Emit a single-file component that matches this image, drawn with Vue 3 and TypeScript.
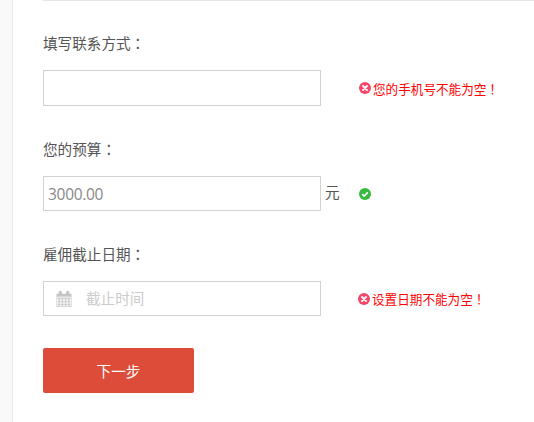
<script setup lang="ts">
const budget = '3000.00'
</script>

<template>
  <div class="page">
    <div class="content">
      <div class="field">
        <label class="label">填写联系方式：</label>
        <div class="row">
          <input class="input tall" type="text" />
          <div class="tip tip-first">
            <svg class="status" viewBox="0 0 12 12">
              <circle cx="6" cy="6" r="6" fill="#f6476b" />
              <path d="M4 4l4 4M8 4l-4 4" stroke="#fff" stroke-width="1.8" stroke-linecap="round" />
            </svg>
            <span>您的手机号不能为空！</span>
          </div>
        </div>
      </div>

      <div class="field">
        <label class="label">您的预算：</label>
        <div class="row">
          <input class="input money" type="text" :value="budget" />
          <span class="unit">元</span>
          <svg class="status ok" viewBox="0 0 12 12">
            <circle cx="6" cy="6" r="6" fill="#35b93f" />
            <path d="M3.2 6.2l2 1.9 3.6-3.7" fill="none" stroke="#fff" stroke-width="1.7" />
          </svg>
        </div>
      </div>

      <div class="field">
        <label class="label">雇佣截止日期：</label>
        <div class="row">
          <div class="input date">
            <svg class="calendar" viewBox="1 .5 14 15">
              <path fill="#c4c4c8" d="M1 3h2V1.5a1 1 0 0 1 1-1h1a1 1 0 0 1 1 1V3h4V1.5a1 1 0 0 1 1-1h1a1 1 0 0 1 1 1V3h2v12.5H1z" />
              <path stroke="#fff" stroke-width=".8" fill="none" d="M2 6.2h12v8.3H2zM5 6.2v8.3M8 6.2v8.3M11 6.2v8.3M2 9h12M2 11.8h12" />
            </svg>
            <input class="date-input" type="text" placeholder="截止时间" />
          </div>
          <div class="tip tip-last">
            <svg class="status" viewBox="0 0 12 12">
              <circle cx="6" cy="6" r="6" fill="#f6476b" />
              <path d="M4 4l4 4M8 4l-4 4" stroke="#fff" stroke-width="1.8" stroke-linecap="round" />
            </svg>
            <span>设置日期不能为空！</span>
          </div>
        </div>
      </div>

      <button class="next" type="button">下一步</button>
    </div>
  </div>
</template>

<style scoped>
.page {
  width: 534px;
  height: 422px;
  box-sizing: border-box;
  padding-left: 43px;
  background: #fff;
  position: relative;
  overflow: hidden;
  font-family: "Liberation Sans", "Noto Sans CJK TC", sans-serif;
  font-size: 14.6px;
  color: #555;
}

/* 左侧边栏 */
.page::before {
  content: '';
  position: absolute;
  left: 0;
  top: 0;
  bottom: 0;
  width: 12px;
  background: #f9f9f9;
  border-right: 1px solid #e8e8e8;
}

.content {
  border-top: 1px solid #e5e5e5;
  padding-top: 33px;
}

.field {
  margin-bottom: 34px;
}

.label {
  display: block;
  height: 20px;
  line-height: 20px;
  margin-bottom: 16px;
}

.row {
  display: flex;
  align-items: center;
}

.input {
  width: 278px;
  height: 35px;
  box-sizing: border-box;
  border: 1px solid #d2d2d2;
  background: #fff;
  outline: none;
  padding: 0 4px;
  font-family: "Open Sans", sans-serif;
  font-size: 15.5px;
  letter-spacing: -0.3px;
  color: #888;
}

.tall {
  height: 36px;
}

.unit {
  margin-left: 4px;
  width: 34px;
  line-height: 20px;
  margin-top: -1px;
  color: #555;
}

.status {
  width: 12px;
  height: 12px;
  flex: none;
}

.tip {
  display: flex;
  align-items: center;
  gap: 2px;
  color: #ff0000;
  font-size: 12.6px;
  white-space: nowrap;
}

.tip-first {
  margin-left: 38px;
}

.tip-last {
  margin-left: 37px;
}

.date {
  display: flex;
  align-items: center;
  padding-left: 12px;
}

.calendar {
  width: 16px;
  height: 16px;
  flex: none;
}

.date-input {
  margin-left: 14px;
  border: 0;
  outline: none;
  width: 200px;
  padding: 0;
  font-family: "Liberation Sans", "Noto Sans CJK TC", sans-serif;
  font-size: 14.6px;
}

.date-input::placeholder {
  color: #ccc;
  opacity: 1;
}

.next {
  display: block;
  width: 151px;
  height: 45px;
  margin-top: -2px;
  border: 0;
  border-radius: 2px;
  background: #dd4b39;
  color: #fff;
  font-family: inherit;
  font-size: 14.6px;
}
</style>

<style>
html, body {
  margin: 0;
}
</style>
